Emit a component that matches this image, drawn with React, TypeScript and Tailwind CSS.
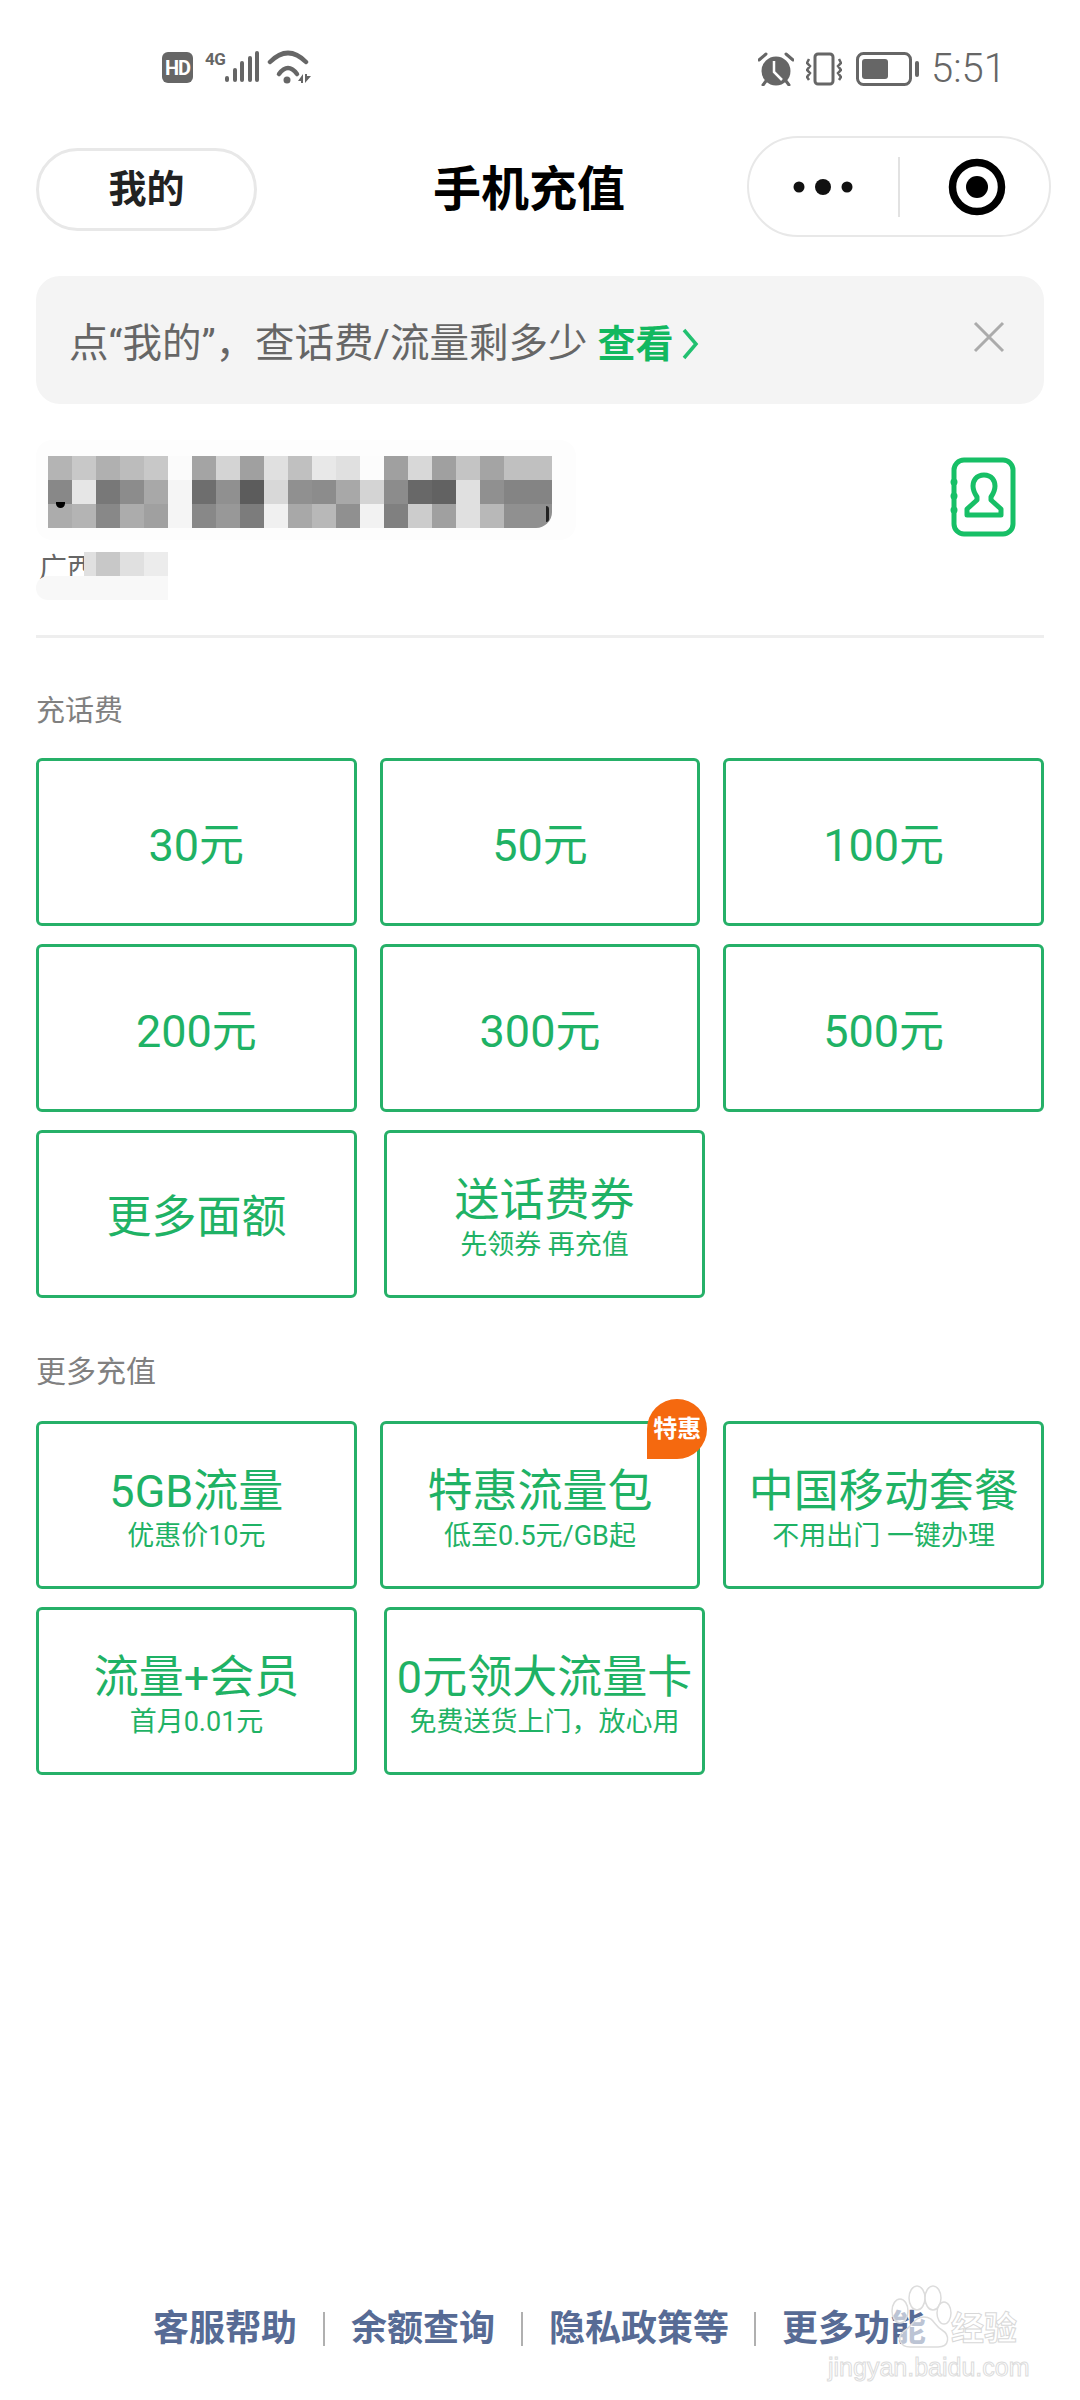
import React from "react";

const mosaicRows = [
  ["bg-[#b4b4b4]","bg-[#c8c8c8]","bg-[#b0b0b0]","bg-[#bcbcbc]","bg-[#c8c8c8]","bg-[#fbfbfb]","bg-[#a4a4a4]","bg-[#d4d4d4]","bg-[#a0a0a0]","bg-[#e0e0e0]","bg-[#c0c0c0]","bg-[#e8e8e8]","bg-[#e0e0e0]","bg-[#fcfcfc]","bg-[#a0a0a0]","bg-[#d8d8d8]","bg-[#a0a0a0]","bg-[#c4c4c4]","bg-[#a4a4a4]","bg-[#c0c0c0]","bg-[#c0c0c0]"],
  ["bg-[#888888]","bg-[#e6e6e6]","bg-[#787878]","bg-[#8c8c8c]","bg-[#a8a8a8]","bg-[#f5f5f5]","bg-[#6e6e6e]","bg-[#909090]","bg-[#5c5c5c]","bg-[#d8d8d8]","bg-[#909090]","bg-[#8c8c8c]","bg-[#a8a8a8]","bg-[#d4d4d4]","bg-[#8c8c8c]","bg-[#686868]","bg-[#626262]","bg-[#e0e0e0]","bg-[#909090]","bg-[#848484]","bg-[#848484]"],
  ["bg-[#acacac]","bg-[#b4b4b4]","bg-[#888888]","bg-[#acacac]","bg-[#a0a0a0]","bg-[#f5f5f5]","bg-[#888888]","bg-[#989898]","bg-[#7c7c7c]","bg-[#f0f0f0]","bg-[#a8a8a8]","bg-[#b8b8b8]","bg-[#909090]","bg-[#f2f2f2]","bg-[#808080]","bg-[#cccccc]","bg-[#a0a0a0]","bg-[#e0e0e0]","bg-[#b8b8b8]","bg-[#909090]","bg-[#909090] rounded-br-[16px]"],
];

function Card({ title, sub, badge }: { title: string; sub?: string; badge?: boolean }) {
  return (
    <div className="relative flex h-[168px] w-[321px] flex-col items-center justify-center rounded-[6px] border-[3px] border-[#26b068] pt-[6px] text-[#1fb265]">
      <div className="text-[45px] leading-[55px]">{title}</div>
      {sub && <div className="text-[27px] leading-[34px]">{sub}</div>}
      {badge && (
        <div className="absolute right-[-10px] top-[-25px] flex h-[60px] w-[60px] items-center justify-center rounded-full rounded-bl-[6px] bg-[#f5690f] text-[24px] font-bold text-white">
          特惠
        </div>
      )}
    </div>
  );
}

function StatusLeft() {
  return (
    <div className="flex items-start">
      <div className="flex h-[31px] w-[31px] items-center justify-center rounded-[6px] bg-[#666666] text-[20px] font-bold tracking-[-1px] text-white">HD</div>
      <svg width="108" height="34" viewBox="0 0 108 34" className="ml-[10px] mt-[-2px]" fill="#666666">
        <rect x="22" y="26" width="4" height="6" rx="2" />
        <rect x="30" y="18" width="4" height="14" rx="2" />
        <rect x="37" y="11" width="4" height="21" rx="2" />
        <rect x="45" y="6" width="4" height="26" rx="2" />
        <rect x="52" y="1" width="4" height="31" rx="2" />
        <path d="M67 12 Q85 -6 103 12" fill="none" stroke="#666666" strokeWidth="4.5" strokeLinecap="round" />
        <path d="M76 24 Q85 12 94 24" fill="none" stroke="#666666" strokeWidth="4.5" strokeLinecap="round" />
        <circle cx="84" cy="30" r="3.5" />
        <path d="M95 31 L100 24 L100 33 L98 33 L98 31 Z M102 24 L104 24 L104 26 L108 26 L102 33 Z" />
      </svg>
      <span className="absolute left-[205px] top-[49px] text-[17px] font-bold leading-[20px] tracking-[-0.5px] text-[#666666]">4G</span>
    </div>
  );
}

function StatusRight() {
  return (
    <div className="flex items-center">
      <svg width="36" height="34" viewBox="0 0 36 34" fill="#666666">
        <circle cx="18" cy="19" r="14.5" />
        <path d="M16 9 L16 20 L24 28" fill="none" stroke="#ffffff" strokeWidth="2.5" />
        <path d="M1 8 L8 2 M35 8 L28 2 M5 33 L8 29 M31 33 L28 29" stroke="#666666" strokeWidth="3" strokeLinecap="round" />
      </svg>
      <svg width="36" height="34" viewBox="2 0 36 34" fill="none" stroke="#666666" className="ml-[12px]">
        <rect x="11" y="2" width="18" height="30" rx="3" strokeWidth="3" />
        <path d="M5 7 L3 11 L6 14 L3 18 L6 21 L3 25 L5 28 M35 7 L37 11 L34 14 L37 18 L34 21 L37 25 L35 28" strokeWidth="2.5" />
      </svg>
      <svg width="64" height="34" viewBox="0 0 64 34" fill="none" className="ml-[14px]">
        <rect x="1.5" y="1.5" width="53" height="31" rx="6" stroke="#666666" strokeWidth="3" />
        <rect x="6" y="7" width="26" height="20" rx="3" fill="#666666" />
        <rect x="59" y="9" width="4" height="16" rx="2" fill="#666666" />
      </svg>
      <span className="ml-[11px] text-[40px] font-light leading-[34px] text-[#666666]">5:51</span>
    </div>
  );
}

export default function App() {
  return (
    <div className="relative flex h-[2400px] w-[1080px] flex-col overflow-hidden bg-white font-['Roboto','Noto_Sans_CJK_SC',sans-serif]">
      {/* Status bar */}
      <div className="flex h-[136px] items-start justify-between pl-[162px] pr-[74px] pt-[52px]">
        <StatusLeft />
        <StatusRight />
      </div>

      {/* Nav */}
      <div className="flex h-[101px] items-center pl-9 pr-[29px]">
        <div className="mt-[6px] flex h-[83px] w-[221px] items-center justify-center rounded-full border-[3px] border-[#e8e8e8] text-[38px] font-bold text-[#222222]">
          我的
        </div>
        <div className="ml-[176px] mt-[7px] text-[48px] font-bold leading-[60px] text-black">手机充值</div>
        <div className="ml-auto flex h-[101px] w-[304px] items-center rounded-full border-2 border-[#e8e8e8]">
          <svg width="60" height="18" viewBox="0 0 60 18" className="ml-[44px]" fill="#111111">
            <circle cx="6" cy="9" r="5.5" />
            <circle cx="30" cy="9" r="8" />
            <circle cx="54" cy="9" r="5.5" />
          </svg>
          <div className="ml-[45px] h-[60px] w-[2px] bg-[#e2e2e2]" />
          <svg width="58" height="58" viewBox="0 0 58 58" className="ml-[48px]">
            <circle cx="29" cy="29" r="24.5" fill="none" stroke="#000000" strokeWidth="7.5" />
            <circle cx="29" cy="29" r="11" fill="#000000" />
          </svg>
        </div>
      </div>

      {/* Banner */}
      <div className="mx-9 mt-[39px] flex h-[128px] items-center rounded-[24px] bg-[#f4f4f4] pl-[33px] pr-[39px]">
        <span className="mt-[8px] text-[39.5px] leading-[50px] text-[#666666]">点“我的”，查话费/流量剩多少</span>
        <span className="ml-[10px] mt-[8px] text-[38px] font-bold leading-[50px] text-[#12b85f]">查看</span>
        <svg width="18" height="32" viewBox="0 0 18 32" fill="none" stroke="#22c070" strokeWidth="3.5" className="ml-[8px] mt-[8px]">
          <path d="M3 2 L15 16 L3 30" />
        </svg>
        <svg width="32" height="32" viewBox="0 0 32 32" fill="none" stroke="#ababab" strokeWidth="3" className="ml-auto mt-[-6px]">
          <path d="M2 2 L30 30 M30 2 L2 30" />
        </svg>
      </div>

      {/* Phone number */}
      <div className="flex h-[231px] justify-between px-9">
        <div className="mt-9 w-[540px]">
          <div className="relative rounded-2xl bg-[#fdfdfd] pb-3 pl-3 pt-4">
            {mosaicRows.map((row, i) => (
              <div key={i} className="flex">
                {row.map((c, j) => (
                  <div key={j} className={`h-[24px] w-[24px] ${c}`} />
                ))}
              </div>
            ))}
            <div className="absolute left-[20px] top-[62px] h-[6px] w-[9px] rounded-b-full bg-black" />
            <div className="absolute left-[510px] top-[66px] h-[16px] w-[3px] rounded-r-full bg-[#222222]" />
          </div>
          <div className="relative mt-3 h-[48px] w-[160px]">
            <div className="h-[34px] pl-[3px] text-[28px] leading-[34px] text-[#666666]">广西</div>
            <div className="absolute left-[48px] top-0 flex">
              <div className="h-[24px] w-[12px] bg-[#e0e0e0]" />
              <div className="h-[24px] w-[24px] bg-[#c8c8c8]" />
              <div className="h-[24px] w-[24px] bg-[#e0e0e0]" />
              <div className="h-[24px] w-[24px] bg-[#ececec]" />
            </div>
            <div className="absolute left-0 top-[24px] h-[24px] w-[132px] rounded-l-xl bg-[#f8f8f8]" />
          </div>
        </div>
        <svg width="66" height="80" viewBox="0 0 66 80" fill="none" stroke="#17bf66" strokeWidth="5" className="mr-[28px] mt-[53px]">
          <rect x="4" y="3" width="59" height="74" rx="10" />
          <circle cx="4" cy="25" r="3.5" fill="#17bf66" stroke="none" />
          <circle cx="4" cy="39" r="3.5" fill="#17bf66" stroke="none" />
          <circle cx="4" cy="53" r="3.5" fill="#17bf66" stroke="none" />
          <path d="M34 18 C26 18 23 24 23 29 C23 34 25 37 27 40 L27 43 L17 52 L17 58 L51 58 L51 52 L41 43 L41 40 C43 37 45 34 45 29 C45 24 42 18 34 18 Z" strokeLinejoin="round" />
        </svg>
      </div>
      <div className="mx-9 h-[3px] bg-[#eeeeee]" />

      {/* Top-up */}
      <div className="ml-9 mt-[53px] text-[29px] leading-[40px] text-[#808080]">充话费</div>
      <div className="mx-9 mt-[27px] flex flex-col gap-[18px]">
        <div className="flex gap-[23px]">
          <Card title="30元" />
          <Card title="50元" />
          <Card title="100元" />
        </div>
        <div className="flex gap-[23px]">
          <Card title="200元" />
          <Card title="300元" />
          <Card title="500元" />
        </div>
        <div className="flex gap-[27px]">
          <Card title="更多面额" />
          <Card title="送话费券" sub="先领券 再充值" />
        </div>
      </div>

      {/* More */}
      <div className="ml-9 mt-[54px] text-[30px] leading-[40px] text-[#808080]">更多充值</div>
      <div className="mx-9 mt-[29px] flex flex-col gap-[18px]">
        <div className="flex gap-[23px]">
          <Card title="5GB流量" sub="优惠价10元" />
          <Card title="特惠流量包" sub="低至0.5元/GB起" badge />
          <Card title="中国移动套餐" sub="不用出门 一键办理" />
        </div>
        <div className="flex gap-[27px]">
          <Card title="流量+会员" sub="首月0.01元" />
          <Card title="0元领大流量卡" sub="免费送货上门，放心用" />
        </div>
      </div>

      {/* Footer */}
      <div className="mb-[53px] mt-auto flex h-[36px] items-center pl-[153px] text-[36px] font-bold text-[#576b95]">
        <span>客服帮助</span>
        <div className="ml-[26px] mr-[26px] h-[34px] w-[2px] bg-[#b0b0b0]" />
        <span>余额查询</span>
        <div className="ml-[26px] mr-[26px] h-[34px] w-[2px] bg-[#b0b0b0]" />
        <span>隐私政策等</span>
        <div className="ml-[25px] mr-[26px] h-[34px] w-[2px] bg-[#b0b0b0]" />
        <span>更多功能</span>
      </div>

      {/* Watermark */}
      <svg width="70" height="70" viewBox="0 0 70 70" className="absolute left-[888px] top-[2285px]" fill="#ffffff" fillOpacity="0.6" stroke="#dcdcdc" strokeWidth="1.5">
        <ellipse cx="12" cy="26" rx="8" ry="12" />
        <ellipse cx="29" cy="13" rx="8" ry="12" />
        <ellipse cx="45" cy="13" rx="8" ry="12" />
        <ellipse cx="56" cy="28" rx="7" ry="11" />
        <path d="M36 32 C26 32 24 42 16 46 C8 52 12 62 22 62 L50 62 C62 62 62 50 54 45 C46 41 46 32 36 32 Z" />
      </svg>
      <span className="absolute left-[951px] top-[2305px] text-[33px] font-bold leading-[48px] text-white [-webkit-text-stroke:1px_#d8d8d8]">经验</span>
      <span className="absolute left-[828px] top-[2352px] font-['Liberation_Sans',sans-serif] text-[25px] leading-[30px] text-white [-webkit-text-stroke:1px_#dcdcdc]">jingyan.baidu.com</span>
    </div>
  );
}
